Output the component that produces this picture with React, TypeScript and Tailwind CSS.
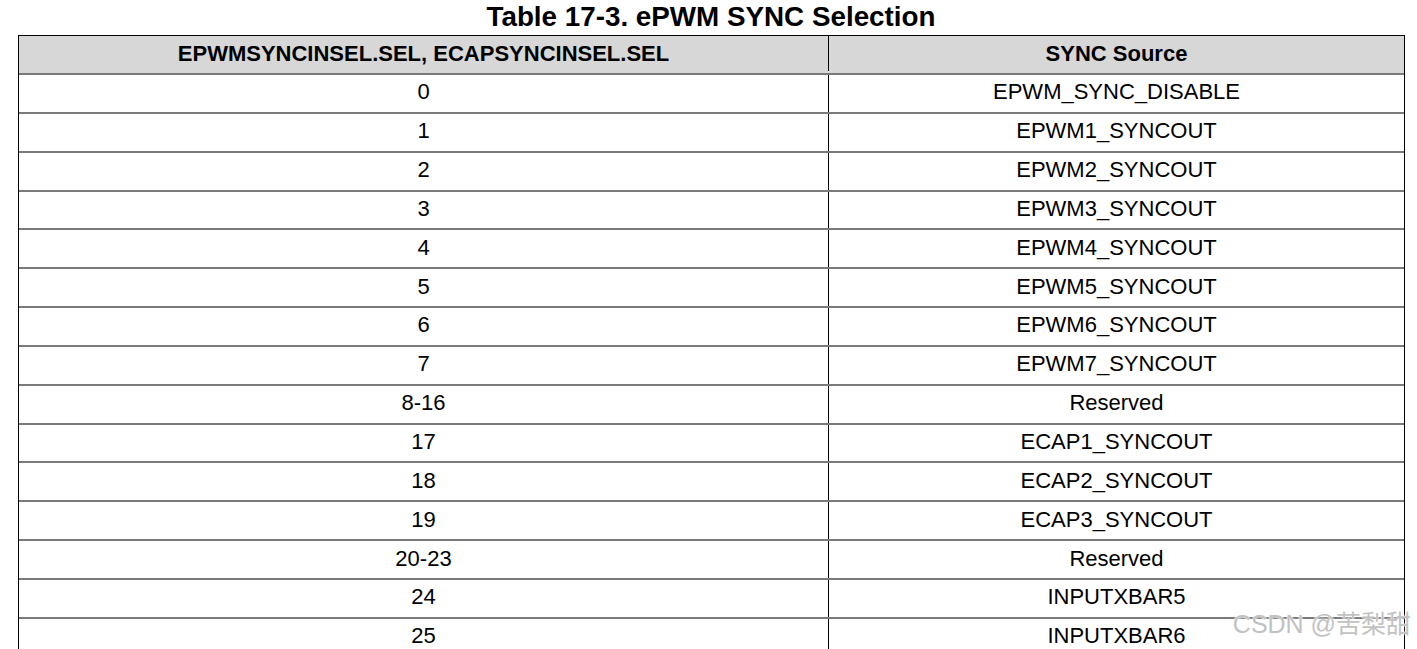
const rows: [string, string][] = [
  ["0", "EPWM_SYNC_DISABLE"],
  ["1", "EPWM1_SYNCOUT"],
  ["2", "EPWM2_SYNCOUT"],
  ["3", "EPWM3_SYNCOUT"],
  ["4", "EPWM4_SYNCOUT"],
  ["5", "EPWM5_SYNCOUT"],
  ["6", "EPWM6_SYNCOUT"],
  ["7", "EPWM7_SYNCOUT"],
  ["8-16", "Reserved"],
  ["17", "ECAP1_SYNCOUT"],
  ["18", "ECAP2_SYNCOUT"],
  ["19", "ECAP3_SYNCOUT"],
  ["20-23", "Reserved"],
  ["24", "INPUTXBAR5"],
  ["25", "INPUTXBAR6"],
];

export default function App() {
  return (
    <div className="relative h-[649px] w-[1417px] overflow-hidden bg-white text-black font-['Liberation_Sans',Arial,sans-serif]">
      <h1 className="h-[35px] pl-[5px] text-center text-[27.8px] font-bold leading-[33px]">
        Table 17-3. ePWM SYNC Selection
      </h1>

      <div className="ml-[18px] w-[1387px] border-x border-t border-black">
        <div className="flex h-[39px] border-b-2 border-[#7a7a7a] bg-[#d7d7d7] pb-[2px] text-[22px] font-bold">
          <div className="flex w-[810px] items-center justify-center border-r border-black">
            EPWMSYNCINSEL.SEL, ECAPSYNCINSEL.SEL
          </div>
          <div className="flex flex-1 items-center justify-center">SYNC Source</div>
        </div>

        {rows.map(([sel, src]) => (
          <div key={sel} className="flex h-[38.85px] border-b-2 border-[#7a7a7a] text-[22px]">
            <div className="flex w-[810px] items-center justify-center border-r border-black pb-[3px]">{sel}</div>
            <div className="flex flex-1 items-center justify-center pb-[3px]">{src}</div>
          </div>
        ))}
      </div>

      <div className="absolute bottom-[12px] right-[6px] text-[25px] leading-none text-[#c2c2c2] [text-shadow:0_0_2px_white,0_0_2px_white] font-['Liberation_Sans','Noto_Sans_CJK_SC',sans-serif]">
        CSDN @苦梨甜
      </div>
    </div>
  );
}
